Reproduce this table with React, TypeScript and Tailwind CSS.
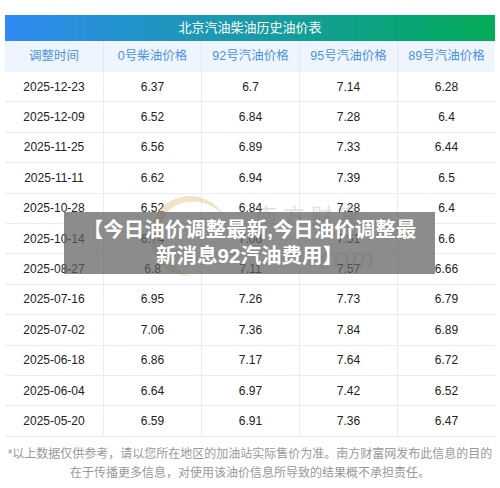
import React from 'react';

const rows = [
  ['2025-12-23', '6.37', '6.7', '7.14', '6.28'],
  ['2025-12-09', '6.52', '6.84', '7.28', '6.4'],
  ['2025-11-25', '6.56', '6.89', '7.33', '6.44'],
  ['2025-11-11', '6.62', '6.94', '7.39', '6.5'],
  ['2025-10-28', '6.52', '6.84', '7.28', '6.4'],
  ['2025-10-14', '6.74', '7.06', '7.51', '6.6'],
  ['2025-08-27', '6.8', '7.11', '7.57', '6.66'],
  ['2025-07-16', '6.95', '7.26', '7.73', '6.79'],
  ['2025-07-02', '7.06', '7.36', '7.84', '6.89'],
  ['2025-06-18', '6.86', '7.17', '7.64', '6.72'],
  ['2025-06-04', '6.64', '6.97', '7.42', '6.52'],
  ['2025-05-20', '6.59', '6.91', '7.36', '6.47'],
];

const heads = ['调整时间', '0号柴油价格', '92号汽油价格', '95号汽油价格', '89号汽油价格'];

const App: React.FC = () => {
  return (
    <div className="relative w-[500px] h-[488px] bg-white overflow-hidden" style={{ fontFamily: '"Liberation Sans", "Noto Sans CJK SC", sans-serif' }}>
      <div className="pt-[15px] px-[5px]">
        <div className="h-[26px] flex items-center justify-center bg-gradient-to-r from-[#308af2] via-[#1a9aa6] to-[#06ab55] text-white text-[13px]">
          北京汽油柴油历史油价表
        </div>
        <div className="grid grid-cols-5 h-[31px] bg-[#eff5fe] text-[#4d92e6] text-[12.5px]">
          {heads.map((h, i) => (
            <div key={i} className={`flex items-center justify-center ${i > 0 ? 'border-l border-[#e3e9f3]' : ''}`}>{h}</div>
          ))}
        </div>
        {rows.map((r, ri) => (
          <div key={ri} className="grid grid-cols-5 h-[30.4px] border-b border-[#e8edf5] text-[#222] text-[12px]">
            {r.map((c, ci) => (
              <div key={ci} className={`flex items-center justify-center ${ci > 0 ? 'border-l border-[#e8edf5]' : ''}`}>{c}</div>
            ))}
          </div>
        ))}
        <div className="pt-[8px] text-center text-[12px] leading-[19px] text-[#999]">
          <p>*以上数据仅供参考，请以您所在地区的加油站实际售价为准。南方财富网发布此信息的目的</p>
          <p>在于传播更多信息，对使用该油价信息所导致的结果概不承担责任。</p>
        </div>
      </div>

      {/* faint watermark */}
      <div className="absolute left-[150px] top-[196px] w-[80px] h-[80px] rounded-full border-l-[10px] border-t-[6px] border-[#e8c98f] opacity-50 -rotate-12" />
      <div className="absolute left-[255px] top-[200px] text-[22px] text-[#888] opacity-25 tracking-[6px]">南方财富</div>
      <div className="absolute left-[318px] top-[232px] text-[34px] italic text-[#888] opacity-25" style={{ fontFamily: '"Liberation Serif", serif' }}>
        com
      </div>

      <div className="absolute left-[64px] top-[212px] w-[371px] h-[62px] bg-[rgba(95,95,95,0.72)] flex items-center justify-center">
        <p className="text-white font-bold text-[20.5px] leading-[26px] text-center">
          【今日油价调整最新,今日油价调整最<br />新消息92汽油费用】
        </p>
      </div>
    </div>
  );
};

export default App;
